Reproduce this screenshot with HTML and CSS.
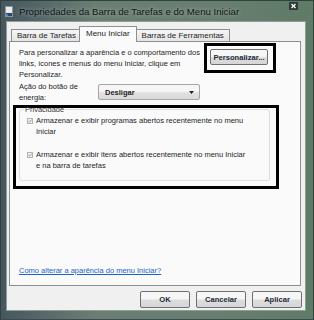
FILE: index.html
```html
<!DOCTYPE html>
<html lang="pt-BR">
<head>
  <meta charset="UTF-8">
  <meta name="viewport" content="width=device-width, initial-scale=1.0">
  <title>Propriedades da Barra de Tarefas e do Menu Iniciar</title>
  <link rel="stylesheet" href="styles.css">
</head>
<body>
  <div class="window">
    <div class="titlebar">
      <svg class="app-icon" width="8" height="11" viewBox="0 0 8 11">
        <rect x="0.5" y="0.5" width="7" height="10" fill="#e8ecef" stroke="#8a949c"/>
        <rect x="1" y="7" width="6" height="3" fill="#3a4650"/>
        <rect x="1" y="8" width="2" height="2" fill="#2f8fd8"/>
      </svg>
      <span class="title">Propriedades da Barra de Tarefas e do Menu Iniciar</span>
      <span class="close">
        <svg width="9" height="8" viewBox="0 0 9 8">
          <rect width="9" height="8" rx="1" fill="#2e3a36"/>
          <path d="M2.5 2 L6.5 6 M6.5 2 L2.5 6" stroke="#fff" stroke-width="1.3"/>
        </svg>
      </span>
    </div>

    <div class="client">
      <div class="tabs">
        <div class="tab">Barra de Tarefas</div>
        <div class="tab active">Menu Iniciar</div>
        <div class="tab">Barras de Ferramentas</div>
      </div>

      <div class="panel">
        <div class="intro">
          <p class="intro-text">Para personalizar a aparência e o comportamento dos<br>links, ícones e menus do menu Iniciar, clique em<br>Personalizar.</p>
          <div class="mark mark-button">
            <button class="btn">Personalizar...</button>
          </div>
        </div>

        <div class="power-row">
          <span class="power-label">Ação do botão de<br>energia:</span>
          <div class="select">
            <span>Desligar</span>
            <svg width="5" height="3" viewBox="0 0 5 3"><path d="M0 0 H5 L2.5 3 Z" fill="#222"/></svg>
          </div>
        </div>

        <div class="mark mark-group">
          <fieldset class="group">
            <legend>Privacidade</legend>
            <div class="check-row">
              <span class="checkbox">
                <svg width="4" height="4" viewBox="0 0 4 4"><path d="M0.4 2 L1.6 3.2 L3.6 0.6" stroke="#8c8c8c" stroke-width="0.9" fill="none"/></svg>
              </span>
              <span>Armazenar e exibir programas abertos recentemente no menu<br>Iniciar</span>
            </div>
            <div class="check-row">
              <span class="checkbox">
                <svg width="4" height="4" viewBox="0 0 4 4"><path d="M0.4 2 L1.6 3.2 L3.6 0.6" stroke="#8c8c8c" stroke-width="0.9" fill="none"/></svg>
              </span>
              <span>Armazenar e exibir itens abertos recentemente no menu Iniciar<br>e na barra de tarefas</span>
            </div>
          </fieldset>
        </div>

        <a class="help-link" href="#">Como alterar a aparência do menu Iniciar?</a>
      </div>

      <div class="buttons">
        <button class="btn btn-dialog">OK</button>
        <button class="btn btn-dialog">Cancelar</button>
        <button class="btn btn-dialog">Aplicar</button>
      </div>
    </div>
  </div>
</body>
</html>
```

FILE: styles.css
```css
body {
  margin: 0;
  font-family: "Liberation Sans", Arial, sans-serif;
  font-size: 7.5px;
  color: #1e1e1e;
}
.window {
  width: 314px;
  height: 320px;
  box-sizing: border-box;
  padding: 0 7px 8px 5px;
  display: flex;
  flex-direction: column;
  background: linear-gradient(90deg, #46565f, #6a7e74 30%, #687e70 70%, #5d7b66);
  border: 1px solid #33403c;
  border-bottom-color: #3c4a50;
}
.titlebar {
  height: 20px;
  display: flex;
  align-items: center;
  margin-left: -1px;
}
.app-icon {
  margin-right: 6px;
  margin-top: 1px;
}
.title {
  font-size: 9.6px;
  color: #101512;
  text-shadow: 0 0 4px rgba(255, 255, 255, 0.5);
}
.close {
  margin-left: auto;
  margin-right: 8px;
  align-self: flex-start;
  margin-top: 1px;
  display: flex;
}
.client {
  flex: 1;
  background: #f0f0f0;
  border: 1px solid #8e9e94;
  display: flex;
  flex-direction: column;
  padding: 4px 3px 2px 2px;
}
.tabs {
  display: flex;
  align-items: flex-end;
  padding-left: 2px;
  height: 15px;
  font-size: 8px;
}
.tab {
  height: 11px;
  line-height: 11px;
  padding: 0 5px;
  background: linear-gradient(#f6f6f6, #e4e4e4);
  border: 1px solid #8c8e94;
  border-bottom: none;
  margin-right: -1px;
  white-space: nowrap;
}
.tab.active {
  height: 15px;
  line-height: 13px;
  background: #fafafa;
  padding: 0 6px;
  margin: 0 -1px -1px -2px;
  position: relative;
  z-index: 1;
}
.panel {
  flex: 1;
  background: #fafafa;
  border: 1px solid #8c8e94;
  margin-right: 1px;
  display: flex;
  flex-direction: column;
  padding: 1px 0 9px 3px;
}
.intro {
  display: flex;
  align-items: flex-start;
}
.intro-text {
  margin: 4px 0 0 6px;
  width: 185px;
  line-height: 11px;
  white-space: nowrap;
}
.mark {
  border: 3px solid #000;
}
.mark-button {
  padding: 3px 5px 5px 3px;
}
.btn {
  font-family: inherit;
  font-size: 7.6px;
  font-weight: bold;
  color: #1e2a3a;
  background: linear-gradient(#f6f6f6 45%, #dddddd 55%, #d6d6d6);
  border: 1px solid #707070;
  border-radius: 2px;
  padding: 0;
  height: 16px;
}
.mark-button .btn {
  width: 58px;
}
.power-row {
  display: flex;
  align-items: center;
  margin: 1px 0 0 6px;
}
.power-label {
  width: 79px;
  line-height: 11px;
}
.select {
  width: 102px;
  height: 16px;
  box-sizing: border-box;
  display: flex;
  align-items: center;
  justify-content: space-between;
  padding: 0 5px 0 6px;
  font-weight: bold;
  background: linear-gradient(#f6f6f6 45%, #e2e2e2 55%, #dadada);
  border: 1px solid #a6a6a6;
  border-radius: 2px;
}
.mark-group {
  width: 260px;
  margin-top: 2px;
}
.group {
  margin: -2px 6px 5px 3px;
  padding: 2px 4px 9px 7px;
  border: 1px solid #d5dfe5;
  border-radius: 3px;
  display: flex;
  flex-direction: column;
  gap: 12px;
}
.group legend {
  padding: 0 1px;
  margin-left: -3px;
  line-height: 7px;
  color: #3c3c3c;
}
.check-row {
  display: flex;
  align-items: flex-start;
  line-height: 11px;
  white-space: nowrap;
}
.checkbox {
  width: 6px;
  height: 6px;
  box-sizing: border-box;
  border: 1px solid #b4b4b4;
  background: #f2f2f2;
  margin: 3px 3px 0 0;
  display: flex;
  align-items: center;
  justify-content: center;
  flex-shrink: 0;
}
.help-link {
  margin: auto 0 0 6px;
  color: #1a64c8;
  line-height: 11px;
}
.buttons {
  display: flex;
  justify-content: flex-end;
  gap: 6px;
  margin-top: 5px;
}
.btn-dialog {
  width: 50px;
  height: 17px;
}
```
